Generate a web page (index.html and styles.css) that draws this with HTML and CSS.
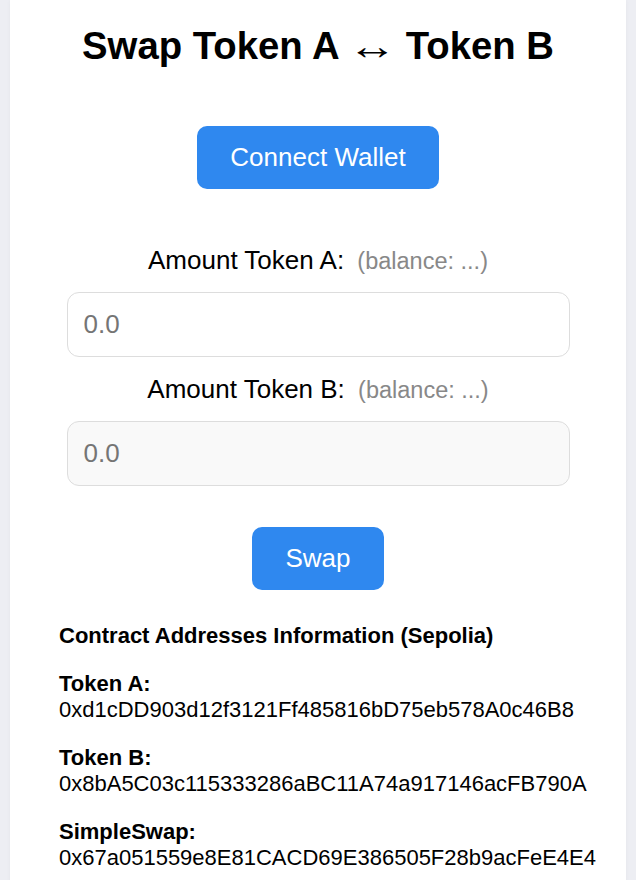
FILE: index.html
```html
<!DOCTYPE html>
<html lang="en">
<head>
<meta charset="utf-8">
<title>Swap Token A ↔ Token B</title>
<link rel="stylesheet" href="styles.css">
</head>
<body>
<main class="card">
  <h1 class="title">Swap Token A <span class="arrow">↔</span> Token B</h1>
  <button class="btn btn-connect" type="button">Connect Wallet</button>
  <div class="field field-first">
    <label class="label" for="amountA">Amount Token A: <span class="balance">(balance: ...)</span></label>
    <input class="input" id="amountA" type="text" placeholder="0.0">
  </div>
  <div class="field field-second">
    <label class="label" for="amountB">Amount Token B: <span class="balance">(balance: ...)</span></label>
    <input class="input input-disabled" id="amountB" type="text" placeholder="0.0" disabled>
  </div>
  <button class="btn btn-swap" type="button">Swap</button>
  <section class="info">
    <p class="info-title"><strong>Contract Addresses Information (Sepolia)</strong></p>
    <p class="info-row"><strong>Token A:</strong><br>0xd1cDD903d12f3121Ff485816bD75eb578A0c46B8</p>
    <p class="info-row"><strong>Token B:</strong><br>0x8bA5C03c115333286aBC11A74a917146acFB790A</p>
    <p class="info-row"><strong>SimpleSwap:</strong><br>0x67a051559e8E81CACD69E386505F28b9acFeE4E4</p>
  </section>
</main>
</body>
</html>
```

FILE: styles.css
```css
html, body {
  margin: 0;
  padding: 0;
}
body {
  background: #edeef3;
  font-family: "Liberation Sans", Arial, sans-serif;
  color: #000;
}
.card {
  margin: 0 10px;
  background: #fff;
  min-height: 880px;
  padding: 24px 0 0;
  box-sizing: border-box;
  display: flex;
  flex-direction: column;
  align-items: center;
  box-shadow: 0 0 4px rgba(0, 0, 0, 0.04);
}
.title {
  margin: 0;
  height: 44px;
  font-size: 38.3px;
  line-height: 44px;
  font-weight: bold;
  text-align: center;
}
.arrow {
  display: inline-block;
  font-weight: normal;
  transform: scaleX(1.3);
  margin: 0 4px;
}
.btn {
  border: none;
  border-radius: 10px;
  background: #2f88ef;
  color: #fff;
  font-family: "Liberation Sans", Arial, sans-serif;
  font-size: 26px;
  line-height: 29px;
  padding: 17px 33px;
  cursor: pointer;
}
.btn-connect {
  margin-top: 58px;
}
.field {
  display: flex;
  flex-direction: column;
  align-items: center;
  width: 503px;
}
.field-first {
  margin-top: 57px;
}
.field-second {
  margin-top: 18px;
}
.label {
  font-size: 26px;
  line-height: 29px;
}
.balance {
  color: #888;
  font-size: 23.5px;
  margin-left: 6px;
}
.input {
  margin-top: 16px;
  width: 100%;
  height: 65px;
  box-sizing: border-box;
  border: 1px solid #ddd;
  border-radius: 12px;
  padding: 0 16px;
  font-family: "Liberation Sans", Arial, sans-serif;
  font-size: 26px;
  background: #fff;
  color: #000;
}
.input::placeholder {
  color: #757575;
}
.input-disabled {
  background: #f9f9f9;
}
.btn-swap {
  margin-top: 41px;
}
.info {
  align-self: stretch;
  padding: 0 49px;
  margin-top: 33px;
  font-size: 22px;
  line-height: 26px;
}
.info p {
  margin: 0 0 22px;
}
```
